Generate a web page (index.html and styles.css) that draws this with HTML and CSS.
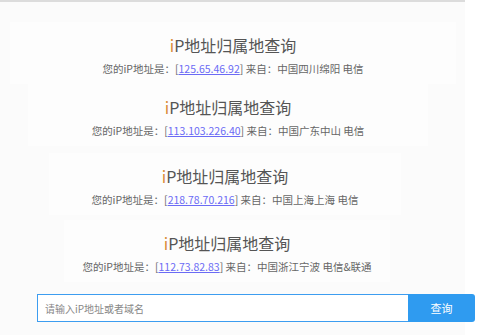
FILE: index.html
```html
<!DOCTYPE html>
<html>
	<head>
		<meta charset="utf-8">
		<title>iP地址归属地查询</title>
		<link rel="stylesheet" href="styles.css">
	</head>
	<body>
		<div class="page">
			<div class="card card1">
				<h2 class="title"><span class="i">i</span>P地址归属地查询</h2>
				<p class="info">您的iP地址是：[<a href="#">125.65.46.92</a>] 来自：中国四川绵阳 电信</p>
			</div>
			<div class="card card2">
				<h2 class="title"><span class="i">i</span>P地址归属地查询</h2>
				<p class="info">您的iP地址是：[<a href="#">113.103.226.40</a>] 来自：中国广东中山 电信</p>
			</div>
			<div class="card card3">
				<h2 class="title"><span class="i">i</span>P地址归属地查询</h2>
				<p class="info">您的iP地址是：[<a href="#">218.78.70.216</a>] 来自：中国上海上海 电信</p>
			</div>
			<div class="card card4">
				<h2 class="title"><span class="i">i</span>P地址归属地查询</h2>
				<p class="info">您的iP地址是：[<a href="#">112.73.82.83</a>] 来自：中国浙江宁波 电信&amp;联通</p>
			</div>

			<form class="search">
				<input type="text" class="search_input" placeholder="请输入iP地址或者域名">
				<button type="button" class="search_btn">查询</button>
			</form>
		</div>
	</body>
</html>
```

FILE: styles.css
```css
body {
	margin:0;
	background:#fff;
	font-family:"Noto Sans CJK SC", "Noto Sans", sans-serif;
}

.page {
	width:465px;
	height:333px;
	background:#fbfbfb;
	border-top:2px solid #dcdcdc;
	overflow:visible;
}

.card {
	background:#fdfdfd;
	text-align:center;
	padding:10px 0 4px;
	height:48px;
}
.card1 { margin:20px 9px 0 10px; }
.card2 { margin:0 37px 0 28px; }
.card3 { margin:7px 64px 0 49px; }
.card4 { margin:5px 75px 0 64px; }

.title {
	margin:0;
	font-size:16px;
	font-weight:normal;
	line-height:26px;
	color:#555;
}
.title .i {
	color:#d98a35;
}

.info {
	margin:0;
	font-size:10.5px;
	line-height:22px;
	color:#666;
}
.info a {
	color:#6b6bf5;
}

.search {
	display:flex;
	width:438px;
	margin:8px 0 0 37px;
	padding-top:4px;
}
.search_input {
	flex:1;
	height:28px;
	box-sizing:border-box;
	border:1px solid #3d9df0;
	border-right:none;
	padding:0 7px;
	font-family:inherit;
	font-size:10px;
	outline:none;
}
.search_input::placeholder {
	color:#888;
}
.search_btn {
	width:67px;
	height:28px;
	border:none;
	border-radius:0 3px 3px 0;
	background:#2f9bf0;
	color:#fff;
	font-family:inherit;
	font-size:11px;
}
```
